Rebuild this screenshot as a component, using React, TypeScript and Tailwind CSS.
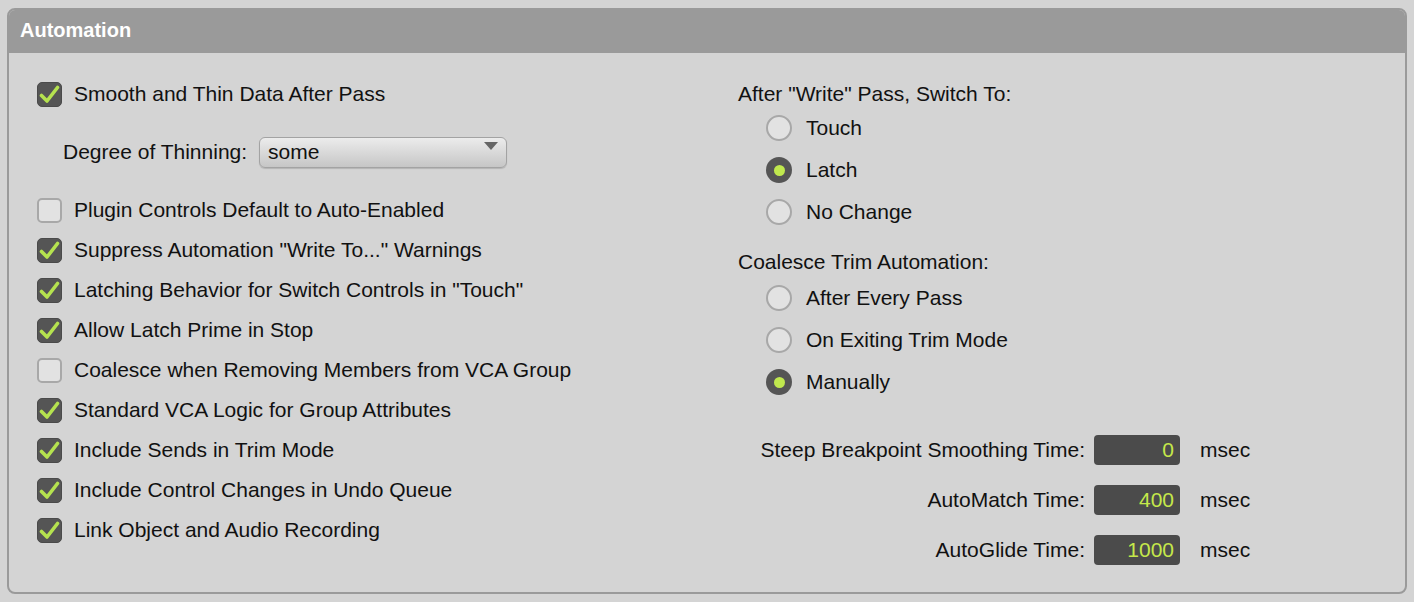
import React from "react";

const font = { fontFamily: '"Liberation Sans", Arial, sans-serif' };

function Check({ on }: { on: boolean }) {
    if (!on) {
        return <div className="w-[25px] h-[25px] rounded-[5px] border-2 border-[#a8a8a8] bg-[#e2e2e2] shrink-0" />;
    }
    return (
        <div className="w-[25px] h-[25px] rounded-[5px] bg-[#555555] border border-[#4a4a4a] shrink-0 flex items-center justify-center">
            <svg width="21" height="19" viewBox="0 0 21 19">
                <path d="M2.5 10.5 L8 16 L18.5 2.5" fill="none" stroke="#b5e24f" strokeWidth="3.6" strokeLinecap="round" strokeLinejoin="round" />
            </svg>
        </div>
    );
}

function Radio({ on }: { on: boolean }) {
    if (!on) {
        return <div className="w-[26px] h-[26px] rounded-full border-2 border-[#a8a8a8] bg-[#e2e2e2] shrink-0" />;
    }
    return (
        <div className="w-[26px] h-[26px] rounded-full bg-[#555555] shrink-0 flex items-center justify-center">
            <div className="w-[11px] h-[11px] rounded-full bg-[#c0e84e]" />
        </div>
    );
}

function CheckRow({ on, label }: { on: boolean; label: string }) {
    return (
        <div className="h-[40px] flex items-center gap-[12px]">
            <Check on={on} />
            <span>{label}</span>
        </div>
    );
}

function RadioRow({ on, label }: { on: boolean; label: string }) {
    return (
        <div className="h-[42px] flex items-center gap-[14px] pl-[28px]">
            <Radio on={on} />
            <span>{label}</span>
        </div>
    );
}

function NumRow({ label, value }: { label: string; value: string }) {
    return (
        <div className="h-[50px] flex items-center">
            <span className="w-[356px] text-right pr-[9px] whitespace-nowrap">{label}</span>
            <div className="w-[86px] h-[30px] rounded-[4px] bg-[#4b4b4b] text-[#c5e84a] flex items-center justify-end pr-[6px] text-[21px]">
                {value}
            </div>
            <span className="ml-[20px]">msec</span>
        </div>
    );
}

export default function App() {
    return (
        <div className="w-[1414px] h-[602px] bg-[#d4d4d4] pt-[8px] px-[7px] text-[#111] text-[21px]" style={font}>
            <div className="h-[586px] rounded-[8px] border-2 border-[#9a9a9a] overflow-hidden bg-[#d4d4d4]">
                <div className="h-[43px] bg-[#9a9a9a] flex items-center pl-[11px] pb-[3px] text-white font-bold text-[20px]">
                    Automation
                </div>
                <div className="flex pt-[21px]">
                    <div className="w-[729px] pl-[28px]">
                        <CheckRow on label="Smooth and Thin Data After Pass" />
                        <div className="h-[76px] flex items-center pl-[26px] gap-[12px]">
                            <span>Degree of Thinning:</span>
                            <div className="w-[248px] h-[31px] rounded-[6px] border border-[#a3a3a3] bg-gradient-to-b from-[#ececec] to-[#c6c6c6] flex items-center justify-between pl-[8px] pr-[8px] shadow-[0_1px_1px_rgba(0,0,0,0.15)]">
                                <span>some</span>
                                <svg width="14" height="10" viewBox="0 0 14 10" className="mb-[10px]">
                                    <path d="M0 0 L14 0 L7 8 Z" fill="#666" />
                                </svg>
                            </div>
                        </div>
                        <CheckRow on={false} label="Plugin Controls Default to Auto-Enabled" />
                        <CheckRow on label={'Suppress Automation "Write To..." Warnings'} />
                        <CheckRow on label={'Latching Behavior for Switch Controls in "Touch"'} />
                        <CheckRow on label="Allow Latch Prime in Stop" />
                        <CheckRow on={false} label="Coalesce when Removing Members from VCA Group" />
                        <CheckRow on label="Standard VCA Logic for Group Attributes" />
                        <CheckRow on label="Include Sends in Trim Mode" />
                        <CheckRow on label="Include Control Changes in Undo Queue" />
                        <CheckRow on label="Link Object and Audio Recording" />
                    </div>
                    <div className="flex-1">
                        <div className="h-[40px] flex items-center">After "Write" Pass, Switch To:</div>
                        <div className="-mt-[7px]">
                            <RadioRow on={false} label="Touch" />
                            <RadioRow on label="Latch" />
                            <RadioRow on={false} label="No Change" />
                        </div>
                        <div className="h-[40px] flex items-center mt-[9px]">Coalesce Trim Automation:</div>
                        <div className="-mt-[5px]">
                            <RadioRow on={false} label="After Every Pass" />
                            <RadioRow on={false} label="On Exiting Trim Mode" />
                            <RadioRow on label="Manually" />
                        </div>
                        <div className="mt-[22px]">
                            <NumRow label="Steep Breakpoint Smoothing Time:" value="0" />
                            <NumRow label="AutoMatch Time:" value="400" />
                            <NumRow label="AutoGlide Time:" value="1000" />
                        </div>
                    </div>
                </div>
            </div>
        </div>
    );
}
